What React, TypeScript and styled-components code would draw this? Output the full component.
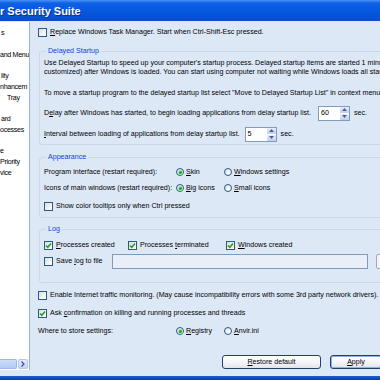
import React from 'react';
import styled, { createGlobalStyle } from 'styled-components';

const GlobalStyle = createGlobalStyle`
  html, body {
    margin: 0;
    padding: 0;
    width: 380px;
    height: 380px;
    overflow: hidden;
    background: #dde8f7;
  }
  body {
    font-family: "Liberation Sans", Arial, sans-serif;
    font-size: 7.1px;
    color: #000;
  }
`;

const Window = styled.div`
  width: 380px;
  height: 380px;
  display: flex;
  flex-direction: column;
  overflow: hidden;
`;

const TitleBar = styled.div`
  height: 21px;
  flex-shrink: 0;
  display: flex;
  align-items: center;
  background: linear-gradient(#4a94f6 0, #0f62e6 3px, #0457df 55%, #0a4ccc 100%);
  color: #fff;
  font-weight: bold;
  font-size: 11px;
  padding-top: 1px;
  box-sizing: border-box;
  text-shadow: 1px 1px 0 #0b2f8a;
  white-space: nowrap;
`;

const Body = styled.div`
  flex: 1;
  display: flex;
  min-height: 0;
`;

const BottomFrame = styled.div`
  height: 4px;
  flex-shrink: 0;
  background: linear-gradient(#1a5ed8, #0a3ca8);
`;

const TreePanel = styled.div`
  width: 29px;
  flex-shrink: 0;
  margin: 1px 0 6px 0;
  background: #fff;
  border-right: 1px solid #9db3d4;
  display: flex;
  flex-direction: column;
  overflow: hidden;
`;

const TreeList = styled.div`
  flex: 1;
  padding-top: 6px;
`;

const TreeItem = styled.div<{ $indent?: number }>`
  height: 10.75px;
  line-height: 10.75px;
  padding-left: ${(p) => p.$indent ?? 0}px;
  letter-spacing: -0.3px;
  white-space: nowrap;
`;

const HScroll = styled.div`
  height: 10px;
  margin-bottom: 1px;
  display: flex;
  background: #f3f6fb;
`;

const ScrollThumb = styled.div`
  width: 17px;
  background: linear-gradient(#cddcfb, #b4c9f5);
  border: 1px solid #9fb5e4;
  border-left: none;
  box-sizing: border-box;
  border-radius: 0 2px 2px 0;
`;

const ScrollArrow = styled.div`
  width: 10px;
  margin-left: 1px;
  display: flex;
  align-items: center;
  justify-content: center;
  background: linear-gradient(#e4ecfd, #c4d5f8);
  border: 1px solid #b6c8ee;
  box-sizing: border-box;
  border-radius: 2px;
`;

const Main = styled.div`
  width: 460px;
  flex-shrink: 0;
  padding: 5px 0 0 8px;
  display: flex;
  flex-direction: column;
`;

const Row = styled.div<{ $h?: number; $mt?: number }>`
  display: flex;
  align-items: center;
  height: ${(p) => p.$h ?? 12}px;
  margin-top: ${(p) => p.$mt ?? 0}px;
  white-space: nowrap;
`;

const Group = styled.fieldset<{ $mt?: number; $h: number }>`
  margin: ${(p) => p.$mt ?? 0}px 0 0 1px;
  padding: 0 0 0 4px;
  min-width: 0;
  height: ${(p) => p.$h}px;
  box-sizing: border-box;
  border: 1px solid #d0d7e2;
  border-radius: 3px;
  display: flex;
  flex-direction: column;
`;

const Legend = styled.legend`
  color: #0b46d0;
  padding: 0 2px;
  margin-left: 2px;
  height: 10px;
  line-height: 10px;
`;

const Para = styled.div<{ $mt?: number }>`
  line-height: 9px;
  margin-top: ${(p) => p.$mt ?? 0}px;
  white-space: nowrap;
`;

const Box = styled.span<{ $gap?: number }>`
  width: 9px;
  height: 9px;
  flex-shrink: 0;
  box-sizing: border-box;
  border: 1px solid #2a5a8c;
  background: linear-gradient(135deg, #dcdcd6 0%, #f4f4f0 60%, #fff 100%);
  margin-right: ${(p) => p.$gap ?? 3}px;
  display: flex;
  align-items: center;
  justify-content: center;
`;

const Radio = styled.span<{ $on?: boolean }>`
  width: 8px;
  height: 8px;
  flex-shrink: 0;
  box-sizing: border-box;
  border-radius: 50%;
  border: 1px solid #2a5a8c;
  background: radial-gradient(circle at 65% 65%, #fff, #dcdcd6);
  margin-right: 2px;
  display: flex;
  align-items: center;
  justify-content: center;
  &::after {
    content: '';
    display: ${(p) => (p.$on ? 'block' : 'none')};
    width: 3px;
    height: 3px;
    border-radius: 50%;
    background: #22a824;
    box-shadow: 0 0 0 1px #9ee09e;
  }
`;

const Cell = styled.div<{ $w: number }>`
  width: ${(p) => p.$w}px;
  flex-shrink: 0;
  display: flex;
  align-items: center;
`;

const Spin = styled.div<{ $ml: number }>`
  width: 32px;
  height: 15px;
  margin-left: ${(p) => p.$ml}px;
  margin-right: 4px;
  box-sizing: border-box;
  border: 1px solid #7f9db9;
  background: #fff;
  display: flex;
  align-items: center;
`;

const SpinValue = styled.span`
  flex: 1;
  padding-left: 2px;
`;

const SpinButtons = styled.div`
  width: 9px;
  height: 13px;
  display: flex;
  flex-direction: column;
  gap: 1px;
`;

const SpinButton = styled.div`
  flex: 1;
  background: linear-gradient(#e6eefc, #bcd0f4);
  border-radius: 1px;
  display: flex;
  align-items: center;
  justify-content: center;
`;

const TextInput = styled.div`
  width: 256px;
  height: 15px;
  margin-left: 9px;
  box-sizing: border-box;
  border: 1px solid #7f9db9;
  background: #e9eff9;
`;

const BrowseButton = styled.div`
  width: 14px;
  height: 15px;
  margin-left: 8px;
  box-sizing: border-box;
  border: 1px solid #a0a9b8;
  border-radius: 2px;
  background: #f4f4f0;
`;

const ButtonRow = styled.div`
  display: flex;
  gap: 9px;
  margin-top: 18px;
  padding-left: 184px;
`;

const Button = styled.div<{ $w: number; $def?: boolean }>`
  width: ${(p) => p.$w}px;
  height: 14px;
  box-sizing: border-box;
  border: 1px solid #1f3f72;
  border-radius: 3px;
  background: linear-gradient(#ffffff, #f2f3f5 60%, #dfe3ea);
  box-shadow: ${(p) => (p.$def ? 'inset 0 0 0 1px #8fb2ea' : 'none')};
  display: flex;
  align-items: center;
  justify-content: center;
`;

const Check = () => (
  <svg width="7" height="7" viewBox="0 0 7 7">
    <path d="M1 3.5 L2.8 5.3 L6 1.6" stroke="#21a121" strokeWidth="1.6" fill="none" />
  </svg>
);

const CheckBox = ({ on, gap }: { on?: boolean; gap?: number }) => (
  <Box $gap={gap}>{on && <Check />}</Box>
);

const Arrow = ({ dir }: { dir: 'up' | 'down' }) => (
  <svg width="5" height="3" viewBox="0 0 5 3">
    <path d={dir === 'up' ? 'M0 3 L2.5 0 L5 3Z' : 'M0 0 L2.5 3 L5 0Z'} fill="#4d6185" />
  </svg>
);

const treeItems: [string, number][] = [
  ['s', 1],
  ['', 0],
  ['and Menu', 0],
  ['', 0],
  ['lity', 1],
  ['nhancem', 0],
  ['Tray', 7],
  ['', 0],
  ['ard', 1],
  ['ocesses', 0],
  ['', 0],
  ['e', 0],
  ['Priority', 0],
  ['vice', 0],
];

export default function App() {
  return (
    <Window>
      <GlobalStyle />
      <TitleBar>r Security Suite</TitleBar>
      <Body>
        <TreePanel>
          <TreeList>
            {treeItems.map(([t, i], k) => (
              <TreeItem key={k} $indent={i}>
                {t}
              </TreeItem>
            ))}
          </TreeList>
          <HScroll>
            <ScrollThumb />
            <ScrollArrow>
              <svg width="4" height="6" viewBox="0 0 4 6">
                <path d="M0.5 0.5 L3 3 L0.5 5.5" stroke="#3b4f8c" strokeWidth="1.2" fill="none" />
              </svg>
            </ScrollArrow>
          </HScroll>
        </TreePanel>
        <Main>
          <Row>
            <CheckBox />
            <span>
              <u>R</u>eplace Windows Task Manager. Start when Ctrl-Shift-Esc pressed.
            </span>
          </Row>
          <Group $mt={8} $h={99}>
            <Legend>Delayed Startup</Legend>
            <Para $mt={3}>
              Use Delayed Startup to speed up your computer's startup process. Delayed startup items are started 1 minute (can be
              <br />
              customized) after Windows is loaded. You can start using computer not waiting while Windows loads all startup programs.
            </Para>
            <Para $mt={12}>
              To move a startup program to the delayed startup list select "Move to Delayed Startup List" in context menu.
            </Para>
            <Row $h={16} $mt={7}>
              <span>
                D<u>e</u>lay after Windows has started, to begin loading applications from delay startup list.
              </span>
              <Spin $ml={7}>
                <SpinValue>60</SpinValue>
                <SpinButtons>
                  <SpinButton>
                    <Arrow dir="up" />
                  </SpinButton>
                  <SpinButton>
                    <Arrow dir="down" />
                  </SpinButton>
                </SpinButtons>
              </Spin>
              <span>sec.</span>
            </Row>
            <Row $h={16} $mt={5}>
              <span>
                <u>I</u>nterval between loading of applications from delay startup list.
              </span>
              <Spin $ml={5}>
                <SpinValue>5</SpinValue>
                <SpinButtons>
                  <SpinButton>
                    <Arrow dir="up" />
                  </SpinButton>
                  <SpinButton>
                    <Arrow dir="down" />
                  </SpinButton>
                </SpinButtons>
              </Spin>
              <span>sec.</span>
            </Row>
          </Group>
          <Group $mt={7} $h={66}>
            <Legend>Appearance</Legend>
            <Row $mt={4}>
              <Cell $w={132}>Program interface (restart required):</Cell>
              <Cell $w={48}>
                <Radio $on />
                <span>
                  <u>S</u>kin
                </span>
              </Cell>
              <Cell $w={80}>
                <Radio />
                <span>
                  <u>W</u>indows settings
                </span>
              </Cell>
            </Row>
            <Row $mt={4}>
              <Cell $w={132}>Icons of main windows (restart required):</Cell>
              <Cell $w={48}>
                <Radio $on />
                <span>
                  <u>B</u>ig icons
                </span>
              </Cell>
              <Cell $w={80}>
                <Radio />
                <span>
                  <u>S</u>mall icons
                </span>
              </Cell>
            </Row>
            <Row $mt={6}>
              <CheckBox />
              <span>Show color tooltips only when Ctrl pressed</span>
            </Row>
          </Group>
          <Group $mt={6} $h={59}>
            <Legend>Log</Legend>
            <Row $mt={5}>
              <Cell $w={84}>
                <CheckBox on />
                <span>
                  <u>P</u>rocesses created
                </span>
              </Cell>
              <Cell $w={98}>
                <CheckBox on />
                <span>
                  Processes <u>t</u>erminated
                </span>
              </Cell>
              <Cell $w={100}>
                <CheckBox on />
                <span>
                  <u>W</u>indows created
                </span>
              </Cell>
            </Row>
            <Row $h={16} $mt={2}>
              <CheckBox />
              <span>
                Save <u>l</u>og to file
              </span>
              <TextInput />
              <BrowseButton />
            </Row>
          </Group>
          <Row $mt={6}>
            <CheckBox />
            <span>Enable Internet traffic monitoring. (May cause incompatibility errors with some 3rd party network drivers).</span>
          </Row>
          <Row $mt={6}>
            <CheckBox on />
            <span>
              Ask <u>c</u>onfirmation on killing and running processes and threads
            </span>
          </Row>
          <Row $mt={6}>
            <Cell $w={138}>Where to store settings:</Cell>
            <Cell $w={48}>
              <Radio $on />
              <span>
                <u>R</u>egistry
              </span>
            </Cell>
            <Cell $w={60}>
              <Radio />
              <span>
                <u>A</u>nvir.ini
              </span>
            </Cell>
          </Row>
          <ButtonRow>
            <Button $w={99}>
              <span>
                <u>R</u>estore default
              </span>
            </Button>
            <Button $w={52} $def>
              <span>
                <u>A</u>pply
              </span>
            </Button>
          </ButtonRow>
        </Main>
      </Body>
      <BottomFrame />
    </Window>
  );
}
